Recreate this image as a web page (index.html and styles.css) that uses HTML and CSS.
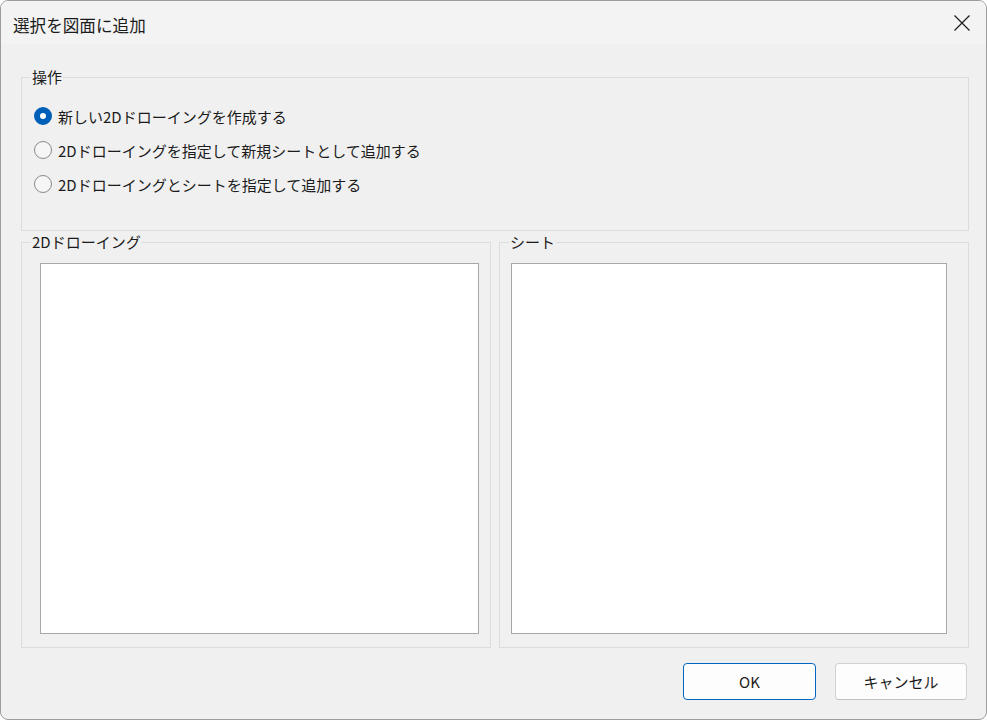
FILE: index.html
```html
<!DOCTYPE html>
<html lang="ja">
<head>
    <meta charset="UTF-8">
    <title>選択を図面に追加</title>
    <link rel="stylesheet" href="styles.css">
</head>
<body>
    <div class="dialog">
        <header class="titlebar">
            <span class="title">選択を図面に追加</span>
            <button class="close-btn" aria-label="閉じる">
                <svg width="16" height="16" viewBox="0 0 16 16">
                    <path d="M0.5 0.5 L15.5 15.5 M15.5 0.5 L0.5 15.5" stroke="#1b1b1b" stroke-width="1.2" fill="none"/>
                </svg>
            </button>
        </header>

        <main class="content">
            <fieldset class="group group-mode">
                <legend>操作</legend>
                <div class="radio-list">
                    <label class="radio-row">
                        <input type="radio" name="mode" checked>
                        <span>新しい2Dドローイングを作成する</span>
                    </label>
                    <label class="radio-row">
                        <input type="radio" name="mode">
                        <span>2Dドローイングを指定して新規シートとして追加する</span>
                    </label>
                    <label class="radio-row">
                        <input type="radio" name="mode">
                        <span>2Dドローイングとシートを指定して追加する</span>
                    </label>
                </div>
            </fieldset>

            <div class="lists">
                <fieldset class="group">
                    <legend>2Dドローイング</legend>
                    <div class="listbox listbox-left"></div>
                </fieldset>
                <fieldset class="group">
                    <legend>シート</legend>
                    <div class="listbox listbox-right"></div>
                </fieldset>
            </div>

            <div class="buttons">
                <button class="btn btn-default">OK</button>
                <button class="btn">キャンセル</button>
            </div>
        </main>
    </div>
</body>
</html>
```

FILE: styles.css
```css
* {
    margin: 0;
    padding: 0;
    box-sizing: border-box;
}

body {
    font-family: "Noto Sans CJK JP", sans-serif;
    background-color: #ffffff;
    color: #1b1b1b;
    width: 987px;
    height: 722px;
    overflow: hidden;
}

.dialog {
    width: 987px;
    height: 720px;
    border: 1px solid #9c9c9c;
    border-radius: 8px;
    background-color: #f0f0f0;
    overflow: hidden;
    display: flex;
    flex-direction: column;
}

.titlebar {
    height: 43px;
    background-color: #f3f3f3;
    display: flex;
    align-items: center;
    justify-content: space-between;
    padding: 1px 16px 0 12px;
}

.title {
    font-size: 16.6px;
    line-height: 20px;
    margin-top: 4px;
}

.close-btn {
    background: none;
    border: none;
    width: 16px;
    height: 16px;
    margin-top: -1px;
    display: flex;
}

.content {
    padding: 23px 17px 0 20px;
    display: flex;
    flex-direction: column;
}

.group {
    border: 1px solid #dcdcdc;
    margin: 0;
    min-width: 0;
}

.group legend {
    font-size: 15px;
    line-height: 20px;
    margin-left: 9px;
    padding: 0 1px;
}

.group-mode {
    padding: 12px 0 29px 0;
}

.radio-list {
    padding-left: 12px;
}

.radio-row {
    display: flex;
    align-items: center;
    height: 34px;
    font-size: 15px;
}

.radio-row input {
    appearance: none;
    width: 18px;
    height: 18px;
    border-radius: 50%;
    border: 1px solid #8a8a8a;
    background-color: #f6f6f6;
    margin-right: 6px;
}

.radio-row input:checked {
    border: 6px solid #005fb8;
    background-color: #ffffff;
}

.lists {
    display: flex;
    gap: 8px;
    margin-top: 1px;
}

.lists .group {
    flex: 1;
    padding: 0 0 13px;
}

.listbox {
    height: 371px;
    margin-top: 11px;
    background-color: #ffffff;
    border: 1px solid #a6a8ad;
}

.listbox-left {
    margin-left: 18px;
    margin-right: 11px;
}

.listbox-right {
    margin-left: 11px;
    margin-right: 21px;
}

.buttons {
    display: flex;
    justify-content: flex-end;
    gap: 19px;
    margin-top: 15px;
    padding-right: 2px;
}

.btn {
    width: 132px;
    height: 37px;
    font-family: "Noto Sans CJK JP", sans-serif;
    font-size: 15px;
    color: #1b1b1b;
    background-color: #fdfdfd;
    border: 1px solid #d2d2d2;
    border-bottom-color: #c2c2c2;
    border-radius: 4px;
}

.btn-default {
    width: 133px;
    border: 1px solid #0067c0;
}
```
